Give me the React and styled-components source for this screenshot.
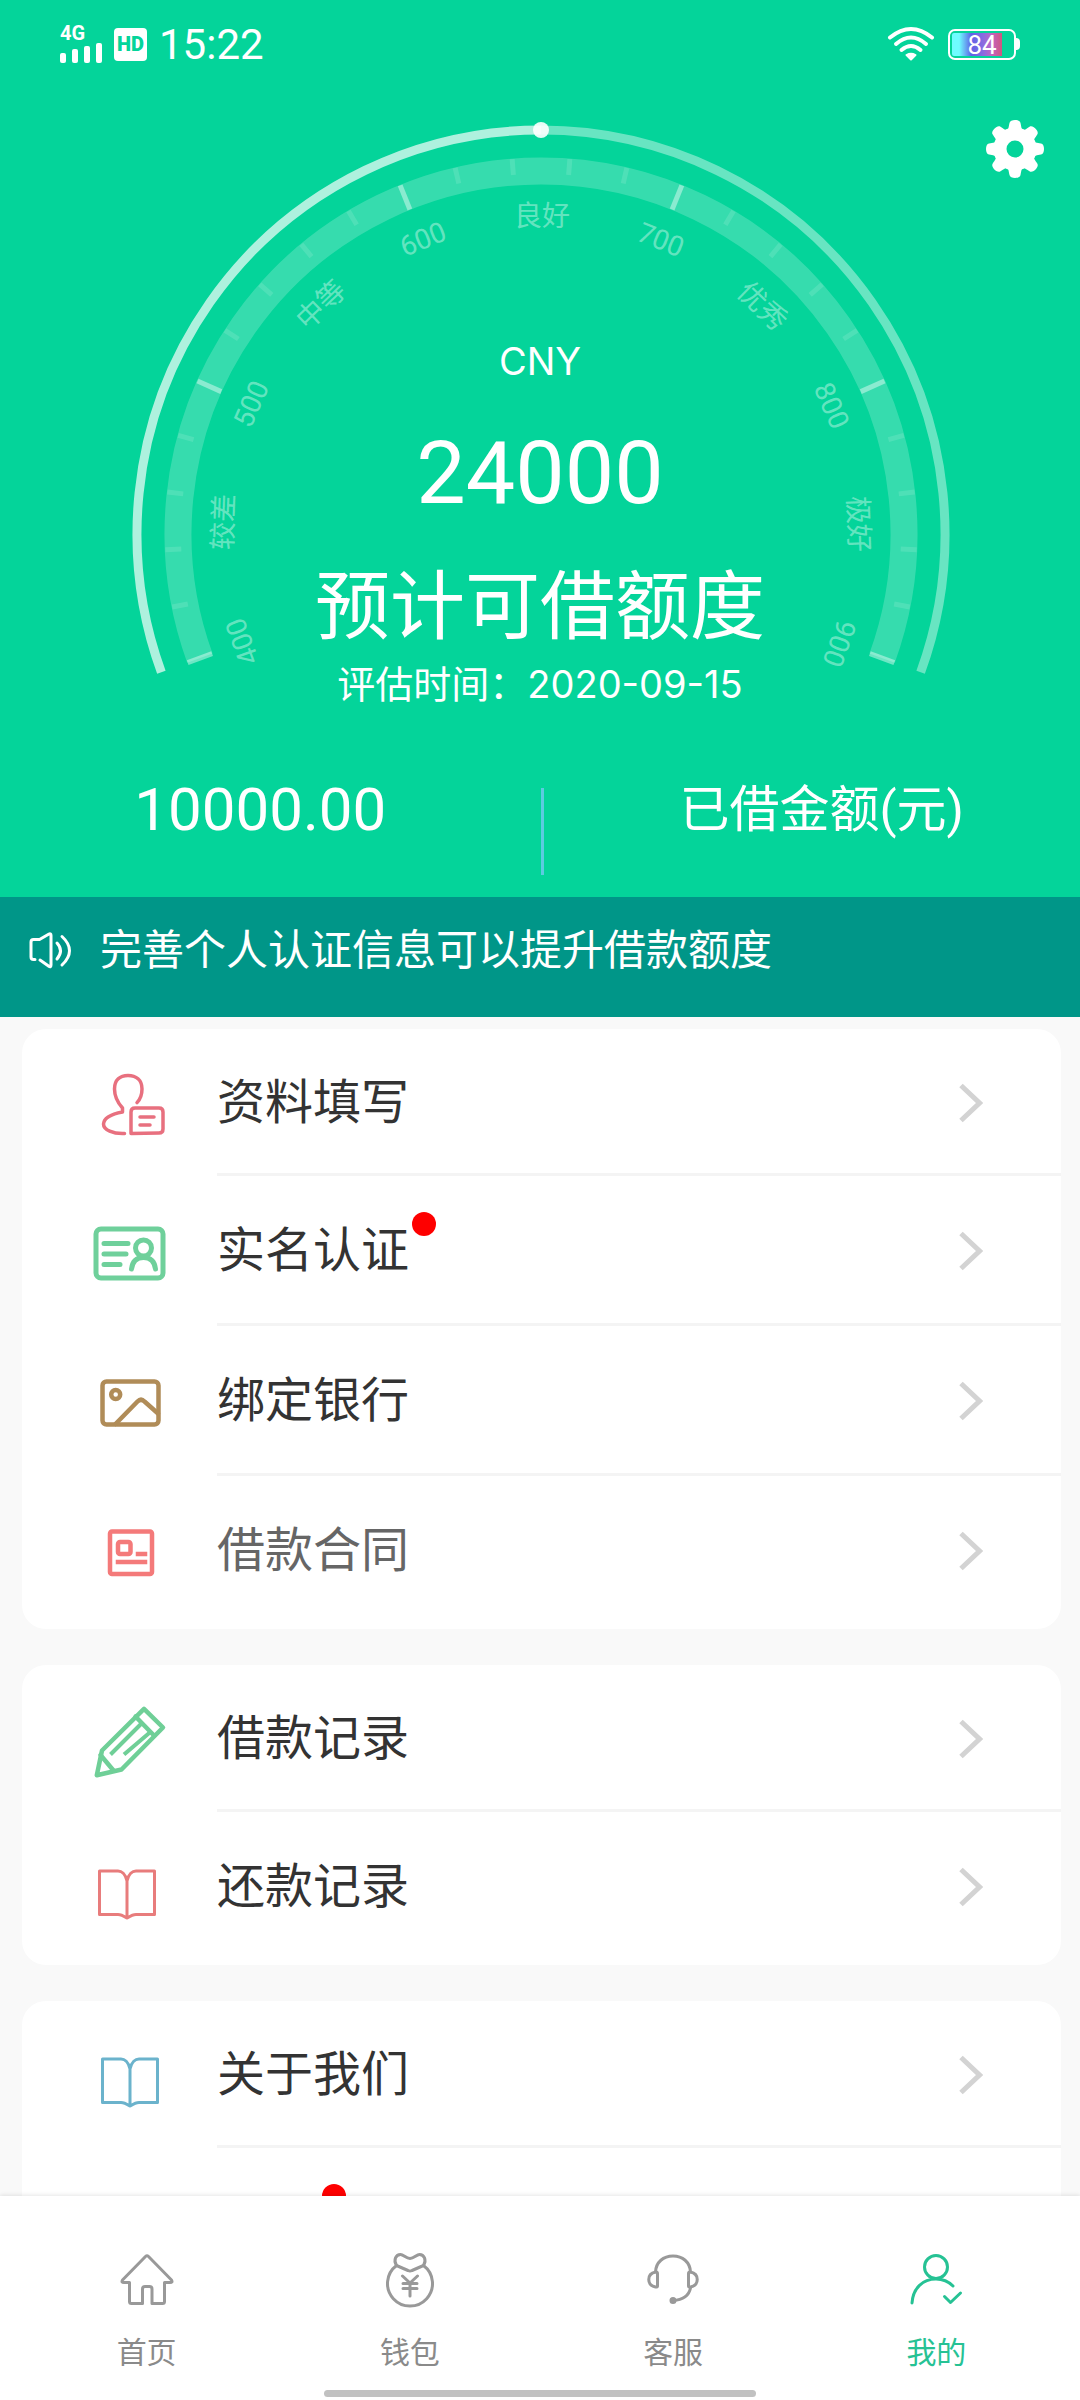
import React from "react";
import styled, { createGlobalStyle } from "styled-components";

const GREEN = "#04d49a";

const GlobalStyle = createGlobalStyle`
  *, *::before, *::after { box-sizing: border-box; }
  body {
    margin: 0;
    background: #f9f9f9;
    font-family: Roboto, "Noto Sans CJK SC", sans-serif;
  }
  button { font: inherit; color: inherit; border: 0; background: none; padding: 0; cursor: pointer; }
  ul { list-style: none; margin: 0; padding: 0; }
  p { margin: 0; }
  svg { display: block; flex: none; }
`;

const Screen = styled.div`
  display: flex;
  flex-direction: column;
  height: 100vh;
  overflow: hidden;
`;

/* ---------- header ---------- */

const Header = styled.header`
  flex: none;
  background: ${GREEN};
  color: #fff;
`;

const StatusBar = styled.div`
  display: flex;
  justify-content: space-between;
  height: 120px;
  padding: 22px 60px 0;
`;

const StatusGroup = styled.div`
  display: flex;
  align-items: center;
  height: 44px;
  gap: ${(p) => p.$gap}px;
`;

const Signal = styled.div`
  display: flex;
  flex-direction: column;
  font-size: 20px;
  font-weight: 700;
  line-height: 16px;
`;

const Bars = styled.div`
  display: flex;
  align-items: flex-end;
  gap: 6px;
  height: 22px;
`;

const Bar = styled.span`
  width: 6px;
  height: ${(p) => p.$height}px;
  border-radius: 2px;
  background: #fff;
`;

const HdBadge = styled.span`
  width: 33px;
  height: 33px;
  border-radius: 4px;
  background: #fff;
  color: ${GREEN};
  font-size: 20px;
  font-weight: 900;
  line-height: 33px;
  text-align: center;
`;

const Clock = styled.time`
  padding-top: 2px;
  font-size: 42px;
  line-height: 44px;
`;

const Battery = styled.div`
  display: flex;
  align-items: center;
`;

const BatteryBody = styled.div`
  width: 68px;
  height: 31px;
  padding: 2px;
  border: 2px solid #fff;
  border-radius: 7px;
`;

const BatteryFill = styled.div`
  width: 100%;
  height: 23px;
  border-radius: 2px;
  background: linear-gradient(90deg, #6ffcff 0 12%, #5f62e6 32%, #8a6be0 52%, #c264c4 66%, #d0557c 84%, transparent 84%);
  font-size: 26px;
  line-height: 24px;
  text-align: center;
`;

const BatteryTip = styled.span`
  width: 4px;
  height: 12px;
  border-radius: 0 4px 4px 0;
  background: #fff;
`;

const Hero = styled.div`
  display: grid;
  grid-template-columns: 1fr;
  justify-items: center;
  & > * { grid-area: 1 / 1; }
`;

const SettingsButton = styled.button`
  justify-self: end;
  align-self: start;
  margin-right: 36px;
`;

const Credit = styled.div`
  display: flex;
  flex-direction: column;
  align-items: center;
  padding-top: 217px;
`;

const Currency = styled.p`
  font-family: Inter, sans-serif;
  font-size: 38px;
  line-height: 48px;
`;

const Amount = styled.p`
  margin-top: 40px;
  font-size: 88px;
  line-height: 96px;
`;

const CreditTitle = styled.p`
  margin-top: 38px;
  font-size: 75px;
  line-height: 96px;
`;

const EvalDate = styled.p`
  margin-top: 5px;
  font-family: Inter, "Noto Sans CJK SC", sans-serif;
  font-size: 38px;
  line-height: 48px;
`;

const Stats = styled.div`
  display: flex;
  padding: 80px 0 22px;
`;

const Stat = styled.div`
  flex: 1;
  padding: ${(p) => p.$pad};
  font-size: ${(p) => p.$size}px;
  line-height: 44px;
  text-align: center;
`;

const StatDivider = styled.div`
  width: 3px;
  height: 87px;
  background: #5ccbe0;
`;

const Notice = styled.div`
  display: flex;
  align-items: center;
  gap: 26px;
  flex: none;
  height: 120px;
  padding: 0 28px 12px;
  background: #009688;
  color: #fff;
  font-size: 42px;
  line-height: 60px;
`;

/* ---------- menu ---------- */

const Menu = styled.main`
  flex: 1;
  min-height: 0;
  overflow: hidden;
  display: flex;
  flex-direction: column;
  gap: 36px;
  padding: 12px 19px 0 22px;
`;

const Card = styled.ul`
  flex: none;
  padding-bottom: 3px;
  border-radius: 24px;
  background: #fff;
`;

const Row = styled.li`
  height: 150px;
  &:first-child { height: 147px; }
`;

const RowButton = styled.button`
  display: flex;
  width: 100%;
  height: 100%;
  text-align: left;
`;

const RowIcon = styled.span`
  display: flex;
  align-items: center;
  width: 195px;
  height: 100%;
  padding-left: 68px;
`;

const RowBody = styled.span`
  flex: 1;
  display: flex;
  align-items: center;
  justify-content: space-between;
  height: 100%;
  padding: 3px 78px 0 0;
  border-bottom: 3px solid ${(p) => (p.$last ? "transparent" : "#f4f4f4")};
`;

const Label = styled.span`
  position: relative;
  min-width: 102px;
  min-height: 72px;
  color: ${(p) => (p.$muted ? "#666" : "#333")};
  font-size: 48px;
  line-height: 72px;
`;

const Dot = styled.i`
  position: absolute;
  left: 100%;
  top: -3px;
  width: 24px;
  height: 24px;
  margin-left: 3px;
  border-radius: 50%;
  background: #fe0000;
`;

/* ---------- tab bar ---------- */

const TabBar = styled.nav`
  position: relative;
  flex: none;
  display: flex;
  flex-direction: column;
  align-items: center;
  padding-bottom: 3px;
  background: #fff;
  box-shadow: 0 -1px 4px rgba(0, 0, 0, 0.1);
`;

const Tabs = styled.div`
  display: flex;
  width: 100%;
  padding: 56px 12px 0 15px;
`;

const Tab = styled.a`
  flex: 1;
  display: flex;
  flex-direction: column;
  align-items: center;
  gap: 23px;
  color: ${(p) => (p.$active ? "#26c294" : "#8a8a8a")};
  font-size: 30px;
  line-height: 44px;
  text-decoration: none;
`;

const HomeIndicator = styled.span`
  width: 40%;
  height: 7px;
  margin-top: 15px;
  border-radius: 4px;
  background: #c1c1c1;
`;

/* ---------- gauge ---------- */

const CX = 411;
const CY = 414;

const polar = (radius, deg) => {
  const a = ((deg - 90) * Math.PI) / 180;
  return [CX + radius * Math.cos(a), CY + radius * Math.sin(a)];
};

const arc = (radius, from, to) => {
  const [x1, y1] = polar(radius, from);
  const [x2, y2] = polar(radius, to);
  const large = to - from > 180 ? 1 : 0;
  return `M${x1} ${y1} A${radius} ${radius} 0 ${large} 1 ${x2} ${y2}`;
};

const scaleLabels = [
  ["400", -110],
  ["较差", -88],
  ["500", -66],
  ["中等", -44],
  ["600", -22],
  ["良好", 0],
  ["700", 22],
  ["优秀", 44],
  ["800", 66],
  ["极好", 88],
  ["900", 110],
];

function Gauge() {
  const ticks = Array.from({ length: 26 }, (_, i) => ({
    deg: -110 + i * 8.8,
    major: i % 5 === 0,
  }));
  return (
    <svg width="820" height="580" viewBox="0 0 820 580" fill="none" stroke="#fff" aria-hidden="true">
      <path d={arc(404, -110, 0)} strokeWidth="9" strokeOpacity="0.68" />
      <path d={arc(404, 0, 110)} strokeWidth="9" strokeOpacity="0.4" />
      <path d={arc(363, -110, 110)} strokeWidth="27" strokeOpacity="0.2" />
      {ticks.map(({ deg, major }) => {
        const [x1, y1] = polar(376, deg);
        const [x2, y2] = polar(major ? 350 : 360, deg);
        return (
          <line
            key={deg}
            x1={x1}
            y1={y1}
            x2={x2}
            y2={y2}
            strokeWidth="5"
            strokeOpacity={major ? 0.42 : 0.12}
          />
        );
      })}
      <circle cx={CX} cy="10" r="8" fill="#fff" fillOpacity="0.9" stroke="none" />
      {scaleLabels.map(([text, deg]) => (
        <text
          key={text}
          x={CX + 1}
          y={CY - 308}
          transform={`rotate(${deg} ${CX} ${CY})`}
          textAnchor="middle"
          fontSize="28"
          fill="#fff"
          fillOpacity="0.4"
          stroke="none"
        >
          {text}
        </text>
      ))}
    </svg>
  );
}

/* ---------- icons ---------- */

function GearIcon() {
  return (
    <svg width="58" height="58" viewBox="0 0 58 58" fill="none" aria-hidden="true">
      <circle cx="29" cy="29" r="15" stroke="#fff" strokeWidth="13" />
      {[0, 45, 90, 135, 180, 225, 270, 315].map((deg) => (
        <path
          key={deg}
          d="M19 12 C23 10 22.500 7 23.500 3 C24 -1 34 -1 34.500 3 C35.500 7 35 10 39 12 Z"
          fill="#fff"
          transform={`rotate(${deg} 29 29)`}
        />
      ))}
    </svg>
  );
}

function WifiIcon() {
  return (
    <svg width="50" height="40" viewBox="0 0 50 40" fill="none" stroke="#fff" strokeWidth="4" strokeLinecap="round" aria-hidden="true">
      <path d="M4 13.500 Q25 -3.500 46 13.500" />
      <path d="M10 20 Q25 7 40 20" />
      <path d="M15.500 26 Q25 18 34.500 26" />
      <path d="M20.500 31 Q25 28.500 29.500 31 L25 35.500 Z" fill="#fff" strokeWidth="2" strokeLinejoin="round" />
    </svg>
  );
}

function SpeakerIcon() {
  return (
    <svg width="46" height="42" viewBox="0 0 46 42" fill="none" stroke="#fff" strokeWidth="3" strokeLinecap="round" strokeLinejoin="round" aria-hidden="true">
      <path d="M7 29.500 H5.500 Q3 29.500 3 27 V12 Q3 9.500 5.500 9.500 H11.500 L21 4 Q23 3 23 5.500 V35 Q23 38 20.500 36 L12 30" />
      <path d="M29 13 Q36 20.500 29 29" />
      <path d="M34 6.500 Q49 20.500 34 35" />
    </svg>
  );
}

function MenuIcon({ color, width, children }) {
  return (
    <svg
      width="80"
      height="80"
      viewBox="0 0 80 80"
      fill="none"
      stroke={color}
      strokeWidth={width}
      strokeLinecap="round"
      strokeLinejoin="round"
      aria-hidden="true"
    >
      {children}
    </svg>
  );
}

const bookPath =
  "M37 34 C35.500 27 31.500 24 28 24 H9.500 V67.500 H28 C31.500 67.500 34.500 69.500 37 71 V34 C38.500 27 42.500 24 46 24 H64.500 V67.500 H46 C42.500 67.500 39.500 69.500 37 71";

const icons = {
  profile: (
    <MenuIcon color="#e8707f" width="3.500">
      <path d="M47 39.600 C50.500 36 52 31 52 26 C52 17 46 12.500 38 12.500 C30 12.500 24.500 17 24.500 26 C24.500 34 28 40 32.500 45 V49 C22 51 14 54 13.500 61 C13.500 67 23 71 34.500 70.500" />
      <path d="M41 70.500 V49 Q41 45 45 45 H69 Q73 45 73 49 V66 Q73 70 69 70 Z" />
      <path d="M50 54 H64 M50 62 H60" />
    </MenuIcon>
  ),
  idCard: (
    <MenuIcon color="#6fd09b" width="5">
      <rect x="6" y="18" width="67" height="49" rx="5" />
      <path d="M14 32.500 H38 M14 43 H36 M14 53.500 H30" />
      <circle cx="53.500" cy="37" r="8" />
      <path d="M41.500 58 C42.500 50 47 46.500 53.500 46.500 C60 46.500 64.500 50 65.500 58" />
    </MenuIcon>
  ),
  bank: (
    <MenuIcon color="#b08c58" width="4.500">
      <rect x="12.500" y="20.500" width="56" height="43" rx="4" />
      <circle cx="25.700" cy="33.500" r="4.500" />
      <path d="M25.500 63 L47.500 40.500 Q51 37 54.500 40.500 L68 52.500" />
    </MenuIcon>
  ),
  contract: (
    <MenuIcon color="#f47a7a" width="4.500">
      <rect x="20" y="20.500" width="42" height="42.500" rx="2" />
      <rect x="28" y="31" width="12.500" height="12" rx="2" />
      <path d="M48 43 H55 M28 51 H55" strokeLinecap="square" />
    </MenuIcon>
  ),
  pencil: (
    <MenuIcon color="#6fcf97" width="4.500">
      <path d="M6.800 76.200 L12 51.500 L54 9.800 L73 28.500 L31.500 70.500 Z" />
      <path d="M45.500 17.500 L64 36.500 M10.500 56 L23.500 71.500" />
      <path d="M51 25 L20.500 55.500 M61 32.500 L34 55.500" strokeWidth="4" strokeLinecap="butt" />
    </MenuIcon>
  ),
  repay: (
    <MenuIcon color="#e87c7c" width="3">
      <path d={bookPath} />
    </MenuIcon>
  ),
  about: (
    <MenuIcon color="#6bb3cc" width="3">
      <path d={bookPath} transform="translate(3 0)" />
    </MenuIcon>
  ),
};

function Chevron() {
  return (
    <svg width="24" height="40" viewBox="0 0 24 40" fill="none" stroke="#d3d3d3" strokeWidth="5" aria-hidden="true">
      <path d="M2 2.500 L20.500 20 L2 37.500" />
    </svg>
  );
}

function TabIcon({ color, children }) {
  return (
    <svg width="56" height="56" viewBox="0 0 56 56" fill="none" stroke={color} strokeWidth="3" strokeLinecap="round" strokeLinejoin="round" aria-hidden="true">
      {children}
    </svg>
  );
}

const tabs = [
  {
    label: "首页",
    href: "#home",
    icon: (
      <TabIcon color="#999">
        <path d="M26.500 4.500 Q28 3 29.500 4.500 L52.500 28 Q54 30.500 51 30.500 H45.500 V49.500 Q45.500 51.500 43.500 51.500 H33 V37 Q33 34.500 30.500 34.500 H26 Q23.500 34.500 23.500 37 V51.500 H12.500 Q10.500 51.500 10.500 49.500 V30.500 H5 Q2 30.500 3.500 28 Z" />
      </TabIcon>
    ),
  },
  {
    label: "钱包",
    href: "#wallet",
    icon: (
      <TabIcon color="#999">
        <path d="M14.500 13.500 A22.500 22.500 0 1 0 41.500 13.500" />
        <path d="M14.500 13.500 C11 8 14 2.500 18.500 2.500 C21.500 2.500 24 6.500 28 6.500 C32 6.500 34.500 2.500 37.500 2.500 C42 2.500 45 8 41.500 13.500 L30 18.500 Q28 19.500 26 18.500 Z" />
        <path d="M20.500 24 L28 31 L35.500 24 M28 31 V44 M21 31.500 H35 M21 36.500 H35" />
      </TabIcon>
    ),
  },
  {
    label: "客服",
    href: "#service",
    icon: (
      <TabIcon color="#999">
        <path d="M10.500 20 C11 10 18.500 4 28 4 C37.500 4 45 10 45.500 20" />
        <path d="M12.500 21.500 V34 Q12.500 35.500 10.500 35 C1.500 33 1.500 22 10.500 20 Q12.500 19.500 12.500 21.500 Z" />
        <path d="M43.500 21.500 V34 Q43.500 35.500 45.500 35 C54.500 33 54.500 22 45.500 20 Q43.500 19.500 43.500 21.500 Z" />
        <path d="M45.500 36 C44 43.500 37.500 48 28 48.500" />
        <circle cx="28" cy="48.500" r="2" fill="#999" />
      </TabIcon>
    ),
  },
  {
    label: "我的",
    href: "#me",
    active: true,
    icon: (
      <TabIcon color="#26c294">
        <circle cx="28" cy="15" r="11.500" />
        <path d="M4 51 C5 36 15 27 28 27 C34.500 27 40.500 29.500 45 34" />
        <path d="M36.500 44.500 L42.500 50.500 L52.500 41" />
      </TabIcon>
    ),
  },
];

const menuGroups = [
  [
    { id: "profile", label: "资料填写" },
    { id: "idCard", label: "实名认证", dot: true },
    { id: "bank", label: "绑定银行" },
    { id: "contract", label: "借款合同", muted: true },
  ],
  [
    { id: "pencil", label: "借款记录" },
    { id: "repay", label: "还款记录" },
  ],
  [
    { id: "about", label: "关于我们" },
    { id: "more", dot: true },
  ],
];

function MenuRow({ item, last }) {
  return (
    <Row>
      <RowButton type="button">
        <RowIcon>{icons[item.id]}</RowIcon>
        <RowBody $last={last}>
          <Label $muted={item.muted}>
            {item.label}
            {item.dot && <Dot />}
          </Label>
          {item.label && <Chevron />}
        </RowBody>
      </RowButton>
    </Row>
  );
}

export default function App() {
  return (
    <Screen>
      <GlobalStyle />
      <Header>
        <StatusBar>
          <StatusGroup $gap={12}>
            <Signal>
              4G
              <Bars>
                {[10, 14, 17, 20].map((h) => (
                  <Bar key={h} $height={h} />
                ))}
              </Bars>
            </Signal>
            <HdBadge>HD</HdBadge>
            <Clock>15:22</Clock>
          </StatusGroup>
          <StatusGroup $gap={12}>
            <WifiIcon />
            <Battery>
              <BatteryBody>
                <BatteryFill>84</BatteryFill>
              </BatteryBody>
              <BatteryTip />
            </Battery>
          </StatusGroup>
        </StatusBar>
        <Hero>
          <Gauge />
          <Credit>
            <Currency>CNY</Currency>
            <Amount>24000</Amount>
            <CreditTitle>预计可借额度</CreditTitle>
            <EvalDate>评估时间：2020-09-15</EvalDate>
          </Credit>
          <SettingsButton type="button" aria-label="设置">
            <GearIcon />
          </SettingsButton>
        </Hero>
        <Stats>
          <Stat $size={60} $pad="0 22px 0 2px">10000.00</Stat>
          <StatDivider />
          <Stat $size={50} $pad="0 0 0 20px">已借金额(元)</Stat>
        </Stats>
      </Header>
      <Notice>
        <SpeakerIcon />
        <p>完善个人认证信息可以提升借款额度</p>
      </Notice>
      <Menu>
        {menuGroups.map((group) => (
          <Card key={group[0].id}>
            {group.map((item, i) => (
              <MenuRow key={item.id} item={item} last={i === group.length - 1} />
            ))}
          </Card>
        ))}
      </Menu>
      <TabBar>
        <Tabs>
          {tabs.map((tab) => (
            <Tab key={tab.href} href={tab.href} $active={tab.active}>
              {tab.icon}
              {tab.label}
            </Tab>
          ))}
        </Tabs>
        <HomeIndicator />
      </TabBar>
    </Screen>
  );
}
